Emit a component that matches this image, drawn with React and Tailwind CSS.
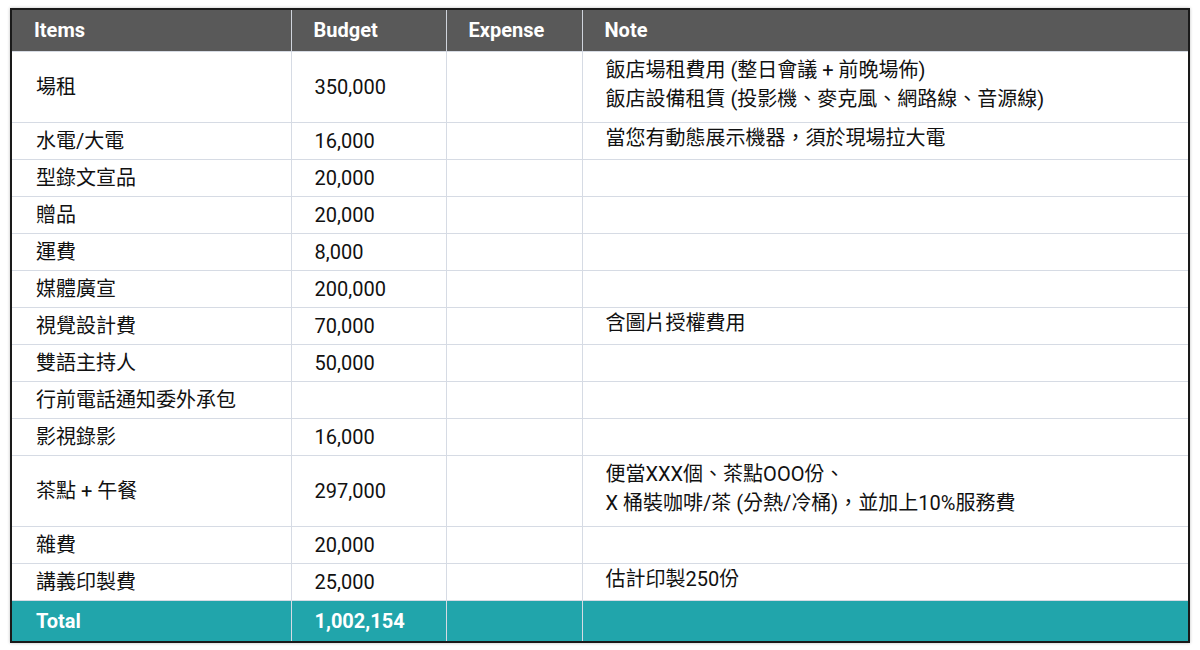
const rows = [
  ["場租", "350,000", ["飯店場租費用 (整日會議 + 前晚場佈)", "飯店設備租賃 (投影機、麥克風、網路線、音源線)"]],
  ["水電/大電", "16,000", ["當您有動態展示機器，須於現場拉大電"]],
  ["型錄文宣品", "20,000", []],
  ["贈品", "20,000", []],
  ["運費", "8,000", []],
  ["媒體廣宣", "200,000", []],
  ["視覺設計費", "70,000", ["含圖片授權費用"]],
  ["雙語主持人", "50,000", []],
  ["行前電話通知委外承包", "", []],
  ["影視錄影", "16,000", []],
  ["茶點 + 午餐", "297,000", ["便當XXX個、茶點OOO份、", "X 桶裝咖啡/茶 (分熱/冷桶)，並加上10%服務費"]],
  ["雜費", "20,000", []],
  ["講義印製費", "25,000", ["估計印製250份"]],
];

export default function App() {
  return (
    <div className="w-[1200px] h-[650px] bg-white pt-2 pl-[10px]" style={{ fontFamily: "Roboto, 'Noto Sans CJK TC', sans-serif" }}>
      <table className="w-[1180px] border-2 border-[#1a1a1a] border-collapse table-fixed text-[20px] text-[#111] shadow-[0_0_3px_rgba(0,0,0,0.25)]">
        <colgroup>
          <col className="w-[280px]" />
          <col className="w-[155px]" />
          <col className="w-[136px]" />
          <col />
        </colgroup>
        <thead>
          <tr className="bg-[#595959] text-white font-bold h-[42px]">
            {["Items", "Budget", "Expense", "Note"].map((h, i) => (
              <th key={h} className={`text-left font-bold pl-[22px] ${i > 0 ? "border-l border-[#d0d4dc]" : ""}`}>{h}</th>
            ))}
          </tr>
        </thead>
        <tbody>
          {rows.map(([item, budget, note]) => (
            <tr key={item} className={`border-t border-[#d6dbe4] ${note.length > 1 ? "h-[71px]" : "h-[37px]"}`}>
              <td className="pl-[24px] leading-[26px]">{item}</td>
              <td className="pl-[23px] border-l border-[#d6dbe4]">{budget}</td>
              <td className="border-l border-[#d6dbe4]"></td>
              <td className="pl-[23px] border-l border-[#d6dbe4] leading-[29px] pb-1">
                {note.map((n) => <div key={n}>{n}</div>)}
              </td>
            </tr>
          ))}
          <tr className="bg-[#21a5ab] text-white font-bold h-[42px] border-t border-[#d6dbe4]">
            <td className="pl-[24px]">Total</td>
            <td className="pl-[23px] border-l border-[#d6dbe4]">1,002,154</td>
            <td className="border-l border-[#d6dbe4]"></td>
            <td className="border-l border-[#d6dbe4]"></td>
          </tr>
        </tbody>
      </table>
    </div>
  );
}
